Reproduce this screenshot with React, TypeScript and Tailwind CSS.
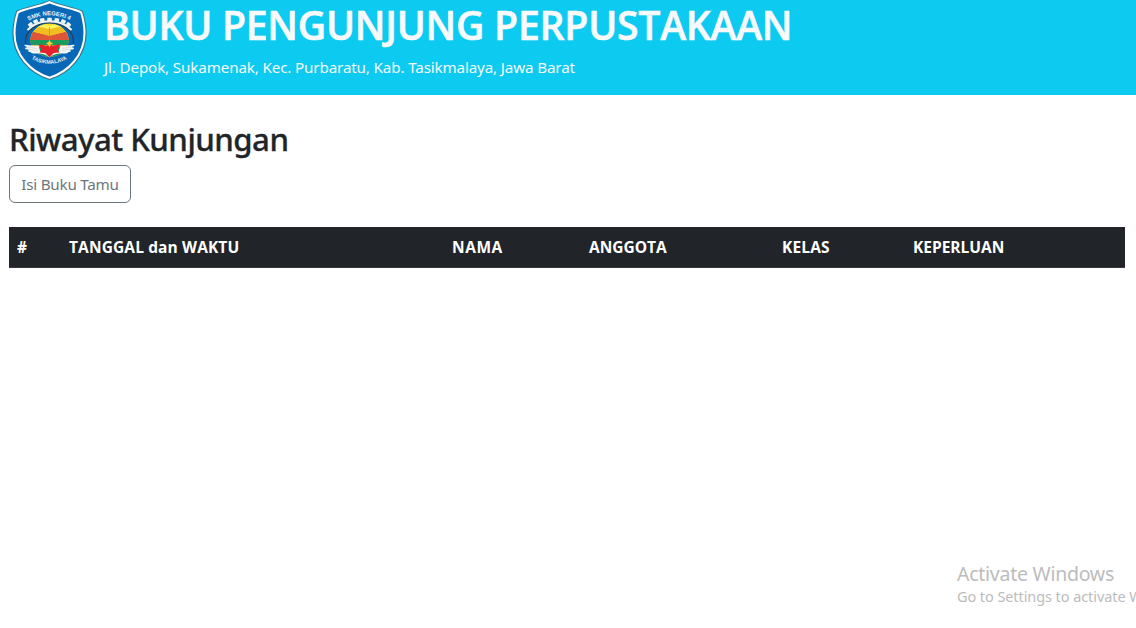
import React from "react";

const columns = [
  { label: "#", width: "w-[52px]", tracking: "tracking-normal" },
  { label: "TANGGAL dan WAKTU", width: "w-[383px]", tracking: "tracking-[0.12px]" },
  { label: "NAMA", width: "w-[137px]", tracking: "tracking-[0.55px]" },
  { label: "ANGGOTA", width: "w-[193px]", tracking: "tracking-[0px]" },
  { label: "KELAS", width: "w-[131px]", tracking: "tracking-[0.15px]" },
  { label: "KEPERLUAN", width: "w-[220px]", tracking: "tracking-[-0.02px]" },
];

const teeth = [
  { x: 19.5, y: 23.5, angle: -42 },
  { x: 25, y: 20.2, angle: -26 },
  { x: 32, y: 18.6, angle: -10 },
  { x: 39.5, y: 18.2, angle: 0 },
  { x: 47, y: 18.6, angle: 10 },
  { x: 54, y: 20.2, angle: 26 },
  { x: 59.5, y: 23.5, angle: 42 },
];

function SchoolLogo() {
  return (
    <svg viewBox="0 0 80 82" className="h-[82px] w-[80px] shrink-0">
      <defs>
        <path id="arc-top" d="M18.500 20.800Q39.500 9.500 62.500 21.500" />
        <path id="arc-bottom" d="M21.500 58.800Q39.500 69 59 58" />
        <clipPath id="disc">
          <ellipse cx="39.500" cy="40.300" rx="19.200" ry="16.500" />
        </clipPath>
      </defs>
      <path
        d="M39.500 .8C44.500 4.200 65 7.500 72.200 11.500C73.800 17 75.800 24.500 75.900 33C76 56 59 73 39.500 79.300C20 73 3 56 3.100 33C3.200 24.500 5.200 17 6.800 11.500C14 7.500 34.500 4.200 39.500 .8Z"
        fill="#0768b7"
        stroke="#416d84"
        strokeWidth="1.500"
      />
      <path
        d="M39.500 2.200C44.500 5.400 64.500 8.700 71.100 12.400C72.800 18 74.500 25 74.500 33C74.500 55.300 58.300 71.800 39.500 77.800C20.700 71.800 4.500 55.300 4.500 33C4.500 25 6.200 18 7.900 12.400C14.500 8.700 34.500 5.400 39.500 2.200Z"
        fill="none"
        stroke="#fff"
        strokeWidth="2"
      />
      <g fill="#edf3f5">
        {teeth.map((tooth) => (
          <rect key={tooth.x} x={tooth.x - 2.3} y={tooth.y - 0.4} width="4.600" height="3.500" rx=".8" transform={`rotate(${tooth.angle} ${tooth.x} ${tooth.y})`} />
        ))}
      </g>
      <path d="M17.500 30Q26 21.500 39.500 21.500T61.500 30" fill="none" stroke="#edf3f5" strokeWidth="2.400" />
      <path d="M15.500 44C13 16 66 16 63.500 44" fill="none" stroke="#253e54" strokeWidth="1.200" />
      <g clipPath="url(#disc)">
        <rect x="19" y="23" width="41" height="36" fill="#dfc62b" />
        <path d="M20 23H59V36L39.500 32L20 36Z" fill="#ffe21c" />
        <path d="M20 31L39.500 35.500L59 31V41H20Z" fill="#df5537" />
        <path d="M25 25L39.500 29L54 25L57 31L39.500 36L22 31Z" fill="#f2bd21" />
        <path d="M29 23L39.500 26V29L25 26Z M50 23L39.500 26V29L54 26Z" fill="#fff15c" />
        <rect x="20" y="40" width="40" height="5.500" fill="#1d9b5e" />
        <rect x="20" y="45" width="40" height="2" fill="#d6b044" />
        <rect x="20" y="47" width="40" height="12" fill="#149260" />
        <path d="M39.500 27V40" stroke="#c97930" strokeWidth=".6" />
      </g>
      <path d="M27.500 45.500C21 46.500 16 44 14.200 45.200C15.500 47 18 47 18 47C15 47.500 14.500 48 15.500 49.200C19 50 20 49.500 20 49.500C17 50.500 18 52 20.500 52C21 54.300 27 53.200 29.500 53.600C34 54 36.300 55 39.500 57.500C42.700 55 45 54 49.500 53.600C52 53.200 58 54.300 58.500 52C61 52 62 50.500 59 49.500C59 49.500 60 50 63.500 49.200C64.500 48 64 47.500 61 47C61 47 63.500 47 64.800 45.200C63 44 58 46.500 51.500 45.500C49.500 46 50 49 48.300 52C44 52 42 54 39.500 56C37 54 35 52 30.700 52C29 49 29.500 46 27.500 45.500Z" fill="#f4f4f4" />
      <path d="M18 47L27 48.500M20 49.500L27.500 50.500M61 47L52 48.500M59 49.500L51.500 50.500" stroke="#b6bdc4" strokeWidth=".4" />
      <path d="M28.500 44.500L33 45L37 46L39.500 41L42 46L46 45L50.500 44.500L47.500 49.500L49.500 52.500L43.500 53L39.500 57.500L35.500 53L29.500 52.500L31.500 49.500Z" fill="#e5232c" />
      <path d="M36 43Q38.500 43.500 39.500 40Q40.500 43.500 43.500 42.800L40.700 45L39.500 47.500L38.200 45Z" fill="#efd02b" />
      <g fill="#e8f2fa" fontFamily="Liberation Sans, sans-serif" fontWeight="700">
        <text fontSize="6">
          <textPath href="#arc-top">SMK NEGERI 4</textPath>
        </text>
        <text fontSize="5.300">
          <textPath href="#arc-bottom">TASIKMALAYA</textPath>
        </text>
      </g>
    </svg>
  );
}

export default function App() {
  return (
    <div className="flex h-[628px] w-full flex-col overflow-hidden bg-white font-['Noto_Sans',sans-serif] text-[#212529]">
      <header className="flex h-[95px] shrink-0 bg-[#0dcaf0] pl-[10px] text-[#f8f9fa]">
        <SchoolLogo />
        <div className="pl-[14px] whitespace-nowrap">
          <h1 className="mt-px h-[48px] font-['Open_Sans',sans-serif] text-[39.200px] leading-[48px] font-semibold tracking-[-0.26px] [-webkit-text-stroke:0.6px_#f8f9fa]">BUKU PENGUNJUNG PERPUSTAKAAN</h1>
          <p className="mt-[6px] text-[15.200px] leading-6 tracking-[-0.14px]">Jl. Depok, Sukamenak, Kec. Purbaratu, Kab. Tasikmalaya, Jawa Barat</p>
        </div>
      </header>
      <main className="flex grow flex-col items-start pt-[25px] pl-[9px]">
        <h2 className="h-[38px] text-[31.200px] leading-[38px] font-medium tracking-[-0.54px] whitespace-nowrap [-webkit-text-stroke:0.3px_#212529]">Riwayat Kunjungan</h2>
        <button className="mt-[7px] h-[38px] w-[122px] rounded-md border border-[#6c757d] text-[15.200px] leading-6 tracking-[-0.22px] whitespace-nowrap text-[#6c757d]">
          Isi Buku Tamu
        </button>
        <table className="mt-6 w-[1116px] table-fixed border-collapse bg-[#212529] text-left text-[15.500px] leading-6 text-white">
          <thead>
            <tr className="h-[40px] border-b border-[#373b3e]">
              {columns.map((column) => (
                <th key={column.label} className={`${column.width} ${column.tracking} px-2 py-0 font-['Open_Sans',sans-serif] font-bold whitespace-nowrap`}>
                  {column.label}
                </th>
              ))}
            </tr>
          </thead>
        </table>
      </main>
      <aside className="ml-[957px] h-[66px] shrink-0 whitespace-nowrap text-[#bcbcbc]">
        <p className="text-[19.500px] leading-6 tracking-[-0.26px]">Activate Windows</p>
        <p className="text-[14.500px] leading-5 tracking-[-0.08px]">Go to Settings to activate Windows.</p>
      </aside>
    </div>
  );
}
